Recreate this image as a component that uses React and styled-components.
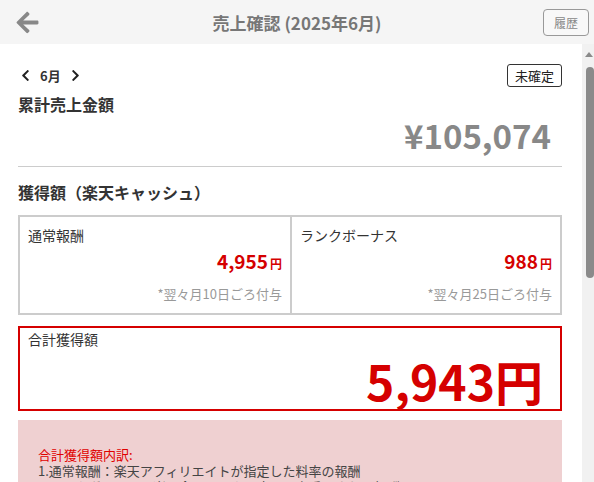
import React from 'react';
import styled, { createGlobalStyle } from 'styled-components';
import { FaArrowLeft, FaChevronLeft, FaChevronRight } from 'react-icons/fa';

const GlobalStyle = createGlobalStyle`
  html, body {
    margin: 0;
    height: 100%;
    overflow: hidden;
    background: #fff;
    font-family: "Noto Sans CJK JP", "Noto Sans", sans-serif;
    color: #333;
  }
  #root {
    height: 100%;
  }
`;

const Page = styled.div`
  height: 100vh;
  display: flex;
  flex-direction: column;
`;

const TopBar = styled.header`
  height: 44px;
  flex: none;
  background: #f5f5f5;
  display: grid;
  grid-template-columns: 1fr auto 1fr;
  align-items: center;
  padding: 0 5px;
`;

const BackButton = styled.button`
  justify-self: start;
  margin-left: 10px;
  border: none;
  background: none;
  padding: 0;
  color: #888;
  display: flex;
  svg {
    font-size: 25px;
  }
`;

const Title = styled.h1`
  margin: 0;
  font-size: 17px;
  font-weight: bold;
  color: #777;
`;

const HistoryButton = styled.button`
  justify-self: end;
  width: 46px;
  height: 27px;
  border: 1px solid #999;
  border-radius: 4px;
  background: #f8f8f8;
  color: #888;
  font-family: inherit;
  font-size: 12px;
  padding: 0;
`;

const Body = styled.div`
  flex: 1;
  min-height: 0;
  display: flex;
`;

const Scroller = styled.main`
  flex: 1;
  overflow: hidden;
`;

/* drawn scrollbar: the headless page shows none of its own */
const ScrollRail = styled.div`
  width: 12px;
  flex: none;
  background: #f1f1f1;
  display: flex;
  flex-direction: column;
  align-items: flex-end;
`;

const ScrollArrow = styled.div`
  align-self: center;
  margin: 8px 0 0 2px;
  width: 0;
  height: 0;
  border-left: 4px solid transparent;
  border-right: 4px solid transparent;
  border-bottom: 5px solid #8a8a8a;
`;

const ScrollThumb = styled.div`
  width: 8px;
  height: 211px;
  margin-top: 10px;
  border-radius: 4px;
  background: #8a8a8a;
`;

const Content = styled.div`
  padding: 20px 20px 60px 18px;
`;

const MonthRow = styled.div`
  display: flex;
  align-items: center;
  justify-content: space-between;
  height: 23px;
`;

const MonthNav = styled.div`
  display: flex;
  align-items: center;
  gap: 8px;
  padding-left: 1px;
  font-size: 13px;
  font-weight: bold;
  color: #333;
  svg {
    font-size: 13px;
    color: #222;
  }
`;

const StatusBadge = styled.span`
  border: 1px solid #333;
  border-radius: 3px;
  padding: 0 7px;
  font-size: 13px;
  line-height: 21px;
  color: #222;
`;

const SectionTitle = styled.h2`
  margin: ${(p) => p.$top || 0}px 0 0;
  font-size: 16px;
  font-weight: bold;
  line-height: 22px;
  color: #333;
`;

const TotalSales = styled.div`
  text-align: right;
  padding-right: 11px;
  font-size: 33px;
  font-weight: bold;
  line-height: 40px;
  color: #888;
`;

const Divider = styled.hr`
  border: none;
  border-top: 1px solid #ccc;
  margin: 11px 0 14px;
`;

const BreakdownGrid = styled.div`
  display: grid;
  grid-template-columns: 1fr 1fr;
  border: 2px solid #ccc;
  margin-top: 12px;
`;

const Cell = styled.div`
  padding: 8px 8px 9px 8px;
  & + & {
    border-left: 2px solid #ccc;
  }
`;

const CellLabel = styled.div`
  font-size: 14px;
  line-height: 20px;
  color: #333;
`;

const Amount = styled.div`
  text-align: right;
  margin-top: 3px;
  font-size: 19px;
  font-weight: bold;
  line-height: 26px;
  color: #d50000;
  span {
    font-size: 12px;
    margin-left: 2px;
  }
`;

const Note = styled.div`
  text-align: right;
  margin-top: 7px;
  font-size: 13px;
  line-height: 20px;
  color: #999;
`;

const TotalBox = styled.div`
  border: 2px solid #d50000;
  margin-top: 11px;
  padding: 1px 17px 0 8px;
  height: 85px;
  box-sizing: border-box;
`;

const TotalAmount = styled.div`
  text-align: right;
  font-size: 48px;
  font-weight: bold;
  line-height: 56px;
  color: #d50000;
  margin-top: 3px;
`;

const InfoBox = styled.div`
  background: #efd0d1;
  margin-top: 9px;
  padding: 27px 20px 24px;
  font-size: 13px;
  line-height: 16px;
  color: #444;
  p {
    margin: 0;
  }
`;

const InfoHeading = styled.p`
  color: #e00000;
`;

export default function App() {
  return (
    <>
      <GlobalStyle />
      <Page>
        <TopBar>
          <BackButton aria-label="戻る">
            <FaArrowLeft />
          </BackButton>
          <Title>売上確認 (2025年6月)</Title>
          <HistoryButton>履歴</HistoryButton>
        </TopBar>
        <Body>
          <Scroller>
            <Content>
              <MonthRow>
                <MonthNav>
                  <FaChevronLeft />
                  <span>6月</span>
                  <FaChevronRight />
                </MonthNav>
                <StatusBadge>未確定</StatusBadge>
              </MonthRow>
              <SectionTitle $top={6}>累計売上金額</SectionTitle>
              <TotalSales>¥105,074</TotalSales>
              <Divider />
              <SectionTitle>獲得額（楽天キャッシュ）</SectionTitle>
              <BreakdownGrid>
                <Cell>
                  <CellLabel>通常報酬</CellLabel>
                  <Amount>
                    4,955<span>円</span>
                  </Amount>
                  <Note>*翌々月10日ごろ付与</Note>
                </Cell>
                <Cell>
                  <CellLabel>ランクボーナス</CellLabel>
                  <Amount>
                    988<span>円</span>
                  </Amount>
                  <Note>*翌々月25日ごろ付与</Note>
                </Cell>
              </BreakdownGrid>
              <TotalBox>
                <CellLabel>合計獲得額</CellLabel>
                <TotalAmount>5,943円</TotalAmount>
              </TotalBox>
              <InfoBox>
                <InfoHeading>合計獲得額内訳:</InfoHeading>
                <p>1.通常報酬：楽天アフィリエイトが指定した料率の報酬</p>
                <p>2.ランクボーナス：楽天会員ランクに応じて上乗せされる報酬</p>
              </InfoBox>
            </Content>
          </Scroller>
          <ScrollRail aria-hidden="true">
            <ScrollArrow />
            <ScrollThumb />
          </ScrollRail>
        </Body>
      </Page>
    </>
  );
}
